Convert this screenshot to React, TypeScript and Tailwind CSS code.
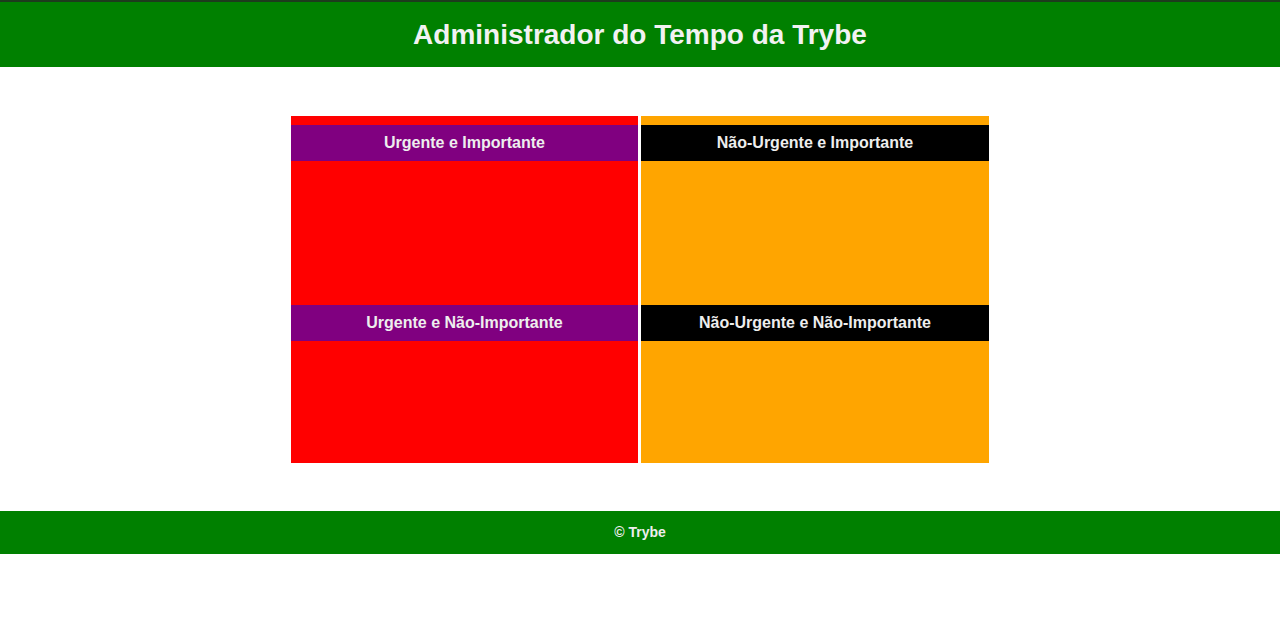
const QUADRANTS = [
  [
    { title: "Urgente e Importante", h: "h-[180px]" },
    { title: "Urgente e Não-Importante", h: "h-[167px]" },
  ],
  [
    { title: "Não-Urgente e Importante", h: "h-[180px]" },
    { title: "Não-Urgente e Não-Importante", h: "h-[167px]" },
  ],
];

function Quadrant({ title, h, bar }: { title: string; h: string; bar: string }) {
  return (
    <section className={`${h} pt-[9px]`}>
      <h2 className={`${bar} h-[36px] flex items-center justify-center text-[16px] font-bold text-[#eeeeee]`}>
        {title}
      </h2>
    </section>
  );
}

export default function App() {
  return (
    <div className="min-h-[636px] bg-white font-['Liberation_Sans',Arial,sans-serif]">
      <header className="h-[67px] bg-[#008000] border-t-2 border-[#1d3b1d] flex items-center justify-center">
        <h1 className="text-[28px] font-bold text-[#f2f2f2] leading-none">
          Administrador do Tempo da Trybe
        </h1>
      </header>

      <main className="flex justify-center gap-[3px] pt-[49px] pb-[48px]">
        <div className="w-[347px] bg-[#ff0000]">
          {QUADRANTS[0].map((q) => (
            <Quadrant key={q.title} title={q.title} h={q.h} bar="bg-[#800080]" />
          ))}
        </div>
        <div className="w-[348px] bg-[#ffa500]">
          {QUADRANTS[1].map((q) => (
            <Quadrant key={q.title} title={q.title} h={q.h} bar="bg-black" />
          ))}
        </div>
      </main>

      <footer className="h-[43px] bg-[#008000] flex items-center justify-center text-[14px] font-bold text-[#eeeeee]">
        © Trybe
      </footer>
    </div>
  );
}
